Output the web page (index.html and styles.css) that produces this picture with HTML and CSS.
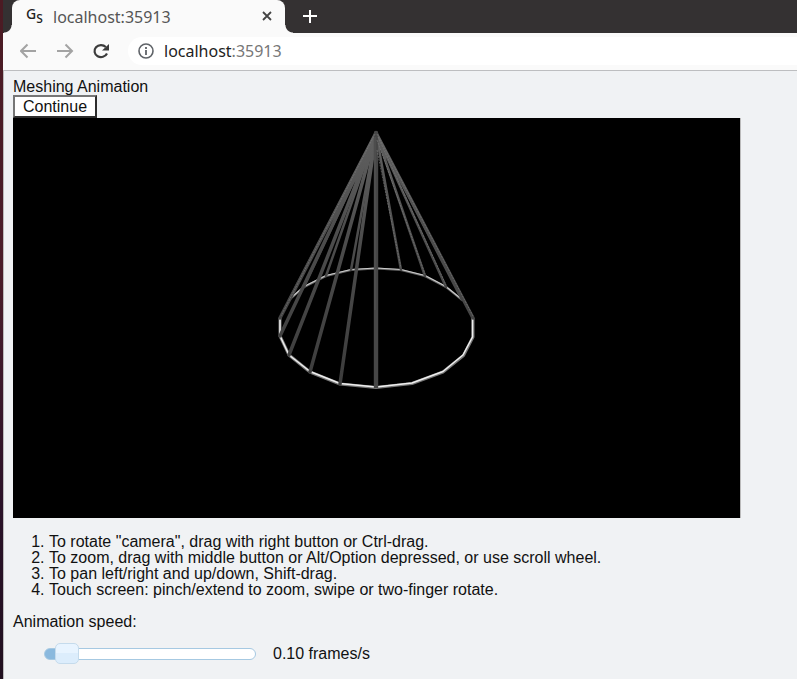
FILE: index.html
```html
<!DOCTYPE html>
<html lang="en">
<head>
<meta charset="utf-8">
<title>localhost:35913</title>
<link rel="stylesheet" href="styles.css">
</head>
<body>
<div class="window">
  <header class="tabs">
    <div class="tab">
      <span class="favicon">G<span class="favicon-s">S</span></span>
      <span class="tab-title">localhost:35913</span>
      <button class="icon-button" aria-label="Close tab"><svg width="12" height="12" viewBox="0 0 12 12"><path d="M2 1l8 8M10 1l-8 8" stroke="#444" stroke-width="1.800"/></svg></button>
    </div>
    <button class="icon-button new-tab" aria-label="New tab"><svg width="14" height="14" viewBox="0 0 14 14"><path d="M7 0v13M0 6h14" stroke="#fff" stroke-width="2"/></svg></button>
  </header>
  <nav class="toolbar">
    <button class="icon-button" aria-label="Back"><svg width="18" height="16" viewBox="0 0 18 16"><path d="M16 8H1M7.500 1.500L1 8l6.500 6.500" fill="none" stroke="#a3a3a3" stroke-width="2"/></svg></button>
    <button class="icon-button" aria-label="Forward"><svg width="18" height="16" viewBox="0 0 18 16"><path d="M1 8h15M9.500 1.500L16 8l-6.500 6.500" fill="none" stroke="#a3a3a3" stroke-width="2"/></svg></button>
    <button class="icon-button" aria-label="Reload"><svg width="18" height="16" viewBox="0 0 18 16"><path d="M15 10.500A6.500 6 0 1 1 13.800 4" fill="none" stroke="#3c3c3c" stroke-width="2.200"/><path d="M17 1v6.500h-7z" fill="#3c3c3c"/></svg></button>
    <div class="address">
      <svg width="16" height="16" viewBox="0 0 16 16"><circle cx="8" cy="8" r="7" fill="none" stroke="#5f6368" stroke-width="1.600"/><path d="M8 7v5M8 4v2" stroke="#5f6368" stroke-width="1.800"/></svg>
      <span>localhost<span class="port">:35913</span></span>
    </div>
  </nav>
  <main class="page">
    <div>Meshing Animation</div>
    <button class="continue">Continue</button>
    <svg class="scene" viewBox="13 118 727 400" role="img" aria-label="Cone mesh">
      <defs>
        <linearGradient id="rod" gradientUnits="userSpaceOnUse" x1="0" y1="132" x2="0" y2="388">
          <stop offset="0" stop-color="#606060"/><stop offset=".4" stop-color="#4d4d4d"/><stop offset="1" stop-color="#3c3c3c"/>
        </linearGradient>
      </defs>
      <g fill="none" stroke-linejoin="round">
        <path d="M289 300L304 287 326 276 351 270 376 268.500 401 270 425 276 446 287 462 300" stroke="#666" stroke-width="2.200"/>
        <path d="M289 299.500L304 286.500 326 275.500 351 269.500 376 268 401 269.500 425 275.500 446 286.500 462 299.500" stroke="#ccc" stroke-width="1.100"/>
        <path d="M280 318V336L289 355 310 372 340 384 376 387.500 412 383.500 443 372 463.500 355.500 473 337V318" stroke="#777" stroke-width="3"/>
        <path d="M280 318V336L289 355 310 371.500 340 383.500 376 387 412 383 443 371.500 463 355 472.500 337V318" stroke="#eee" stroke-width="1.500"/>
      </g>
      <g fill="none" stroke="url(#rod)" stroke-linecap="round">
        <path stroke-width="2.500" d="M376 133L351 270M376 133L326 276M376 133L304 287M376 133L289 300M376 133L401 270M376 133L425 276M376 133L446 287M376 133L462 300"/>
        <path stroke-width="3.500" d="M376 133L280 318M376 133L280 336M376 133L289 355M376 133L310 372M376 133L340 384M376 133L473 318"/>
      </g>
      <path d="M373.800 133a2 2 0 0 1 4.400 0V388h-4.400z" fill="#464646"/>
      <path d="M375 137V310" stroke="#555" stroke-width="1"/>
      <g fill="none" stroke="#777" stroke-width=".7" stroke-dasharray="2 1">
        <path d="M377 134L473 316M378 137L446 285M375 134L281 316M377 150L401 268M377 140L425 274"/>
      </g>
    </svg>
    <ol class="help">
      <li>To rotate "camera", drag with right button or Ctrl-drag.</li>
      <li>To zoom, drag with middle button or Alt/Option depressed, or use scroll wheel.</li>
      <li>To pan left/right and up/down, Shift-drag.</li>
      <li>Touch screen: pinch/extend to zoom, swipe or two-finger rotate.</li>
    </ol>
    <label for="speed">Animation speed:</label>
    <div class="speed-row">
      <input id="speed" class="slider" type="range" min="0" max="1.9" step="0.1" value="0.1">
      <output for="speed">0.10 frames/s</output>
    </div>
  </main>
</div>
</body>
</html>
```
FILE: styles.css
```css
* { box-sizing: border-box; }
body {
  margin: 0;
  min-height: 100vh;
  padding-left: 3px;
  background: linear-gradient(#4b1b23, #4a1d2a 40%, #2a1228 75%, #21101f);
  color: #111;
  font: 16px/16px "Liberation Sans", Arial, sans-serif;
}
button { font: inherit; }
.window {
  min-height: 100vh;
  background: #f0f2f4;
  border-left: 1px solid #bbb;
}
.icon-button {
  display: flex;
  padding: 0;
  border: 0;
  background: none;
}
.tabs {
  display: flex;
  align-items: center;
  height: 33px;
  margin-left: -1px;
  background: #343132;
}
.tab {
  position: relative;
  display: flex;
  align-items: center;
  width: 273px;
  height: 33px;
  margin-left: 9px;
  padding: 0 12px 0 14px;
  border-radius: 8px 8px 0 0;
  background: #fafafa;
}
.tab::before,
.tab::after {
  content: "";
  position: absolute;
  bottom: 0;
  width: 8px;
  height: 8px;
}
.tab::before {
  right: 100%;
  background: radial-gradient(circle at 0 0, transparent 7px, #fafafa 8px);
}
.tab::after {
  left: 100%;
  background: radial-gradient(circle at 100% 0, transparent 7px, #fafafa 8px);
}
.favicon {
  width: 27px;
  color: #222;
  font: 500 14px/20px "Noto Sans", sans-serif;
}
.favicon-s {
  font-size: 12px;
  vertical-align: sub;
}
.tab-title {
  flex: 1;
  color: #555;
  font: 16px/20px "Noto Sans", sans-serif;
}
.new-tab { margin-left: 18px; }
.toolbar {
  display: flex;
  align-items: center;
  gap: 18px;
  height: 38px;
  margin-left: -1px;
  padding: 0 0 2px 17px;
  border-bottom: 1px solid #bdbec0;
  background: #fafafa;
}
.address {
  display: flex;
  flex: 1;
  align-items: center;
  gap: 10px;
  height: 28px;
  padding-left: 10px;
  border-radius: 14px 0 0 14px;
  background: #fff;
  color: #222;
  font: 16px/20px "Noto Sans", sans-serif;
}
.port { color: #777; }
.page { padding: 8px 8px 8px 9px; }
.continue {
  display: block;
  height: 23px;
  padding: 0 8px;
  border: 2px solid;
  border-color: #767676 #2d2d2d #2d2d2d #767676;
  background: #fff;
  color: #111;
}
.scene {
  display: block;
  width: 100%;
  max-width: 728px;
  border-right: 1px solid #bbb;
  background: #000;
}
.help {
  margin: 16px 0;
  padding-left: 36px;
}
.speed-row {
  display: flex;
  align-items: center;
  gap: 17px;
  margin: 14px 0 0 31px;
}
.slider {
  width: 212px;
  height: 20px;
  margin: 0;
  appearance: none;
  background: none;
}
.slider::-webkit-slider-runnable-track {
  height: 12px;
  border: 1px solid #a6c9e2;
  border-radius: 6px;
  background: linear-gradient(90deg, #8ab9de 16px, #fff 16px);
}
.slider::-webkit-slider-thumb {
  width: 24px;
  height: 21px;
  margin-top: -6px;
  appearance: none;
  border: 1px solid #c5dbec;
  border-radius: 5px;
  background: linear-gradient(#e8f4ff 50%, #dcedfc 50%);
}
```
